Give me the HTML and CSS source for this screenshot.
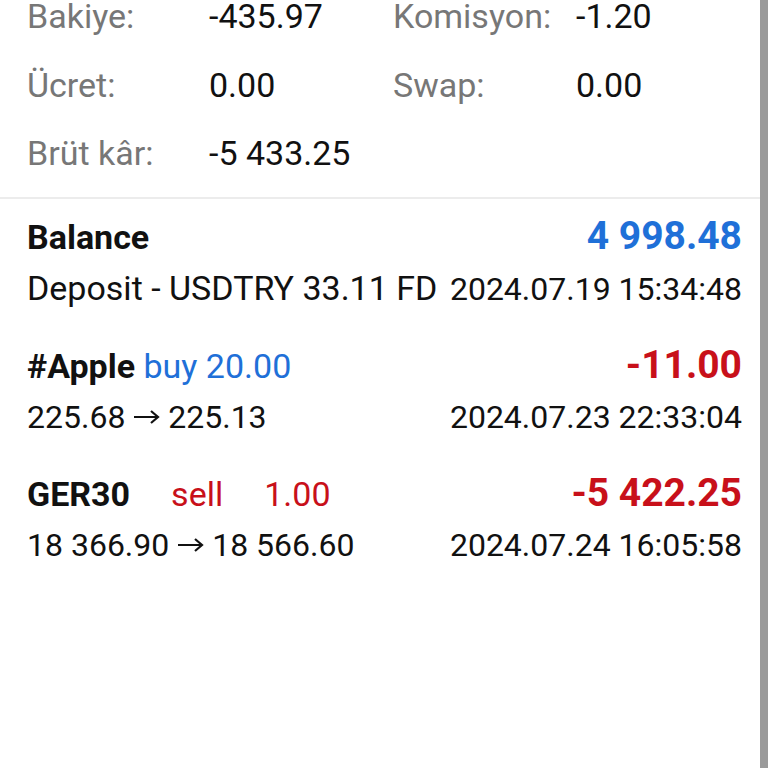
FILE: index.html
```html
<!DOCTYPE html>
<html lang="tr">
<head>
    <meta charset="UTF-8">
    <meta name="viewport" content="width=device-width,initial-scale=1">
    <title>Geçmiş</title>
    <link rel="stylesheet" href="styles.css">
</head>
<body>
<div class="screen">
    <div class="content">
        <div class="summary">
            <span class="label">Bakiye:</span>
            <span class="value">-435.97</span>
            <span class="label">Komisyon:</span>
            <span class="value">-1.20</span>
            <span class="label">Ücret:</span>
            <span class="value">0.00</span>
            <span class="label">Swap:</span>
            <span class="value">0.00</span>
            <span class="label">Brüt kâr:</span>
            <span class="value">-5 433.25</span>
        </div>
        <div class="deals">
            <div class="deal">
                <div class="deal-top">
                    <span class="symbol">Balance</span>
                    <span class="amount blue">4 998.48</span>
                </div>
                <div class="deal-bottom">
                    <span class="comment">Deposit - USDTRY 33.11 FD</span>
                    <span>2024.07.19 15:34:48</span>
                </div>
            </div>
            <div class="deal">
                <div class="deal-top">
                    <span><span class="symbol">#Apple</span> <span class="blue">buy 20.00</span></span>
                    <span class="amount red">-11.00</span>
                </div>
                <div class="deal-bottom">
                    <span>225.68 <svg class="arrow" viewBox="0 0 27 16"><path d="M1 8h24M18 2l7 6-7 6"/></svg> 225.13</span>
                    <span>2024.07.23 22:33:04</span>
                </div>
            </div>
            <div class="deal">
                <div class="deal-top">
                    <span><span class="symbol">GER30</span><span class="red wide">sell</span><span class="red wide">1.00</span></span>
                    <span class="amount red">-5 422.25</span>
                </div>
                <div class="deal-bottom">
                    <span>18 366.90 <svg class="arrow" viewBox="0 0 27 16"><path d="M1 8h24M18 2l7 6-7 6"/></svg> 18 566.60</span>
                    <span>2024.07.24 16:05:58</span>
                </div>
            </div>
        </div>
    </div>
    <div class="scrollbar"></div>
</div>
</body>
</html>
```

FILE: styles.css
```css
* {
    box-sizing: border-box;
}
body {
    background: #fff;
    color: #111;
    font-family: Roboto, "Noto Sans", sans-serif;
    font-size: 34px;
    margin: 0;
    overflow: hidden;
}
.screen {
    display: flex;
    height: 768px;
}
.content {
    flex-grow: 1;
}
.scrollbar {
    background: #9a9a9a;
    width: 8px;
}
.summary {
    border-bottom: solid 2px #ececec;
    display: grid;
    grid-template-columns: 182px 184px 183px 1fr;
    line-height: 68.5px;
    margin-top: -18px;
    padding: 0 0 9px 27px;
}
.summary .label {
    color: #777;
}
.deal {
    padding: 12px 18px 12px 27px;
}
.deal-top,
.deal-bottom {
    align-items: baseline;
    display: flex;
    justify-content: space-between;
}
.deal-top {
    height: 50px;
    line-height: 50px;
}
.deal-bottom {
    font-size: 32px;
    line-height: 54px;
}
.deal-bottom .comment {
    font-size: 34px;
}
.arrow {
    fill: none;
    height: 16px;
    stroke: #111;
    stroke-width: 2.2;
    vertical-align: 3px;
    width: 27px;
}
.symbol {
    font-weight: bold;
}
.amount {
    font-size: 39px;
    font-weight: bold;
}
.blue {
    color: #1f70d8;
}
.red {
    color: #c8101a;
}
.wide {
    margin-left: 41px;
}
```
